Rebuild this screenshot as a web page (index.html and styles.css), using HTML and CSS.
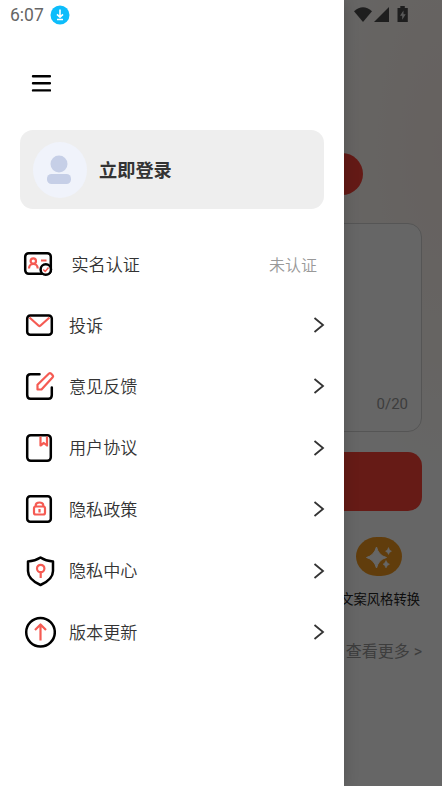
FILE: index.html
```html
<!DOCTYPE html>
<html lang="zh-CN">
<head>
<meta charset="utf-8">
<title>菜单</title>
<link rel="stylesheet" href="styles.css">
</head>
<body>
<main class="page">
  <div class="system-icons">
    <svg width="55" height="18" viewBox="0 0 55 18" fill="#4d4d4d">
      <path d="M0 5.2Q9 -2.7 18 5.2L9 16Z"/>
      <path d="M35 1V16H20Z"/>
      <path d="M43.500 2h2.8V0h4.500v2h3v14H43.500Z"/>
      <path d="M49.500 4.5l-3.500 5.300h2.200v4l3.500-5.500h-2.200Z" fill="#ddd"/>
    </svg>
  </div>
  <div class="pill"></div>
  <section class="editor"><span>0/20</span></section>
  <div class="action"></div>
  <section class="tool">
    <svg width="46" height="40" viewBox="0 0 46 40">
      <rect width="46" height="39" rx="21" ry="19.5" fill="#f39a20"/>
      <path d="M20.500 10Q22.500 18.500 30.500 20.500Q22.500 22.500 20.500 31Q18 22.500 10.500 20.500Q18 18.500 20.500 10Z" fill="#fff" stroke="#fff" stroke-linejoin="round"/>
      <path d="M32.500 10.500Q33 13.500 35.500 14.200Q33 15 32.500 17.500Q31.800 15 29.500 14.200Q31.800 13.500 32.500 10.500ZM30 23.500Q31 26.500 33.500 27.200Q31 28 30 31Q29 28 27 27.200Q29 26.500 30 23.500Z" fill="#fff" stroke="#fff" stroke-width=".5"/>
    </svg>
    <span>文案风格转换</span>
  </section>
  <div class="more">查看更多 &gt;</div>
</main>
<div class="scrim"></div>
<aside class="drawer">
  <header class="status">
    <span>6:07</span>
    <svg width="20" height="20" viewBox="0 0 20 20"><circle cx="10" cy="10" r="9.500" fill="#0dbdfb"/><path d="M10 4.500V12M7 9.300L10 12.200L13 9.300M7 14.500H13" fill="none" stroke="#fff" stroke-width="1.600"/></svg>
  </header>
  <svg class="burger" width="20" height="18" viewBox="0 0 20 18"><path d="M2 2.200H19M2 9.300H19M2 16.400H19" stroke="#000" stroke-width="2.400" stroke-linecap="round"/></svg>
  <section class="login">
    <svg width="54" height="56" viewBox="0 0 54 56"><ellipse cx="27" cy="28" rx="27" ry="28" fill="#f0f3fb"/><circle cx="26" cy="22" r="8.500" fill="#c6cfe7"/><rect x="14" y="32" width="24" height="10" rx="4.500" fill="#c6cfe7"/></svg>
    <span>立即登录</span>
  </section>
  <nav class="menu">
    <div class="row verify">
      <svg class="icon" width="34" height="34" viewBox="0 0 34 34"><rect x="3.200" y="6.200" width="25.600" height="20.600" rx="3.500" class="ink"/><circle cx="11.300" cy="14" r="2.700" class="red"/><path d="M7 21.500C7.200 15.500 15.500 15.500 15.700 21.500M19 13.500H24.500" class="red"/><circle cx="23.800" cy="22.500" r="5.200" class="ink" fill="#fff"/><path d="M21.200 22.500L23.200 24.500L26.500 20.500" class="red thin"/></svg>
      <span class="label">实名认证</span><span class="state">未认证</span>
    </div>
    <div class="row">
      <svg class="icon" width="34" height="34" viewBox="0 0 34 34"><rect x="5.200" y="7.500" width="24.600" height="19.300" rx="3" class="ink"/><path d="M7.500 9.500L16.700 17.700Q17.500 18.300 18.300 17.700L27.500 9.500" class="red"/></svg>
      <span class="label">投诉</span><svg class="chevron" width="12" height="18" viewBox="0 0 12 18"><path d="M1.500 2L10 9L1.500 16"/></svg>
    </div>
    <div class="row">
      <svg class="icon" width="34" height="34" viewBox="0 0 34 34"><path d="M17.500 5.200H8.500Q5.200 5.200 5.200 8.500V26Q5.200 29.800 8.500 29.800H26.500Q29.800 29.800 29.800 26V18.500" class="ink"/><path d="M15.500 20.500V15.800L27 4.500Q28 3.700 29 4.600L30.800 6.500Q31.500 7.300 30.700 8.200L19.500 20.500Z" class="red"/></svg>
      <span class="label">意见反馈</span><svg class="chevron" width="12" height="18" viewBox="0 0 12 18"><path d="M1.500 2L10 9L1.500 16"/></svg>
    </div>
    <div class="row">
      <svg class="icon" width="34" height="34" viewBox="0 0 34 34"><rect x="5.200" y="4.200" width="23.600" height="25.600" rx="3.500" class="ink"/><path d="M18.500 5.500V14.500L21.800 12L25 14.500V5.500" class="red"/></svg>
      <span class="label">用户协议</span><svg class="chevron" width="12" height="18" viewBox="0 0 12 18"><path d="M1.500 2L10 9L1.500 16"/></svg>
    </div>
    <div class="row">
      <svg class="icon" width="34" height="34" viewBox="0 0 34 34"><rect x="5.200" y="4.200" width="23.600" height="25.600" rx="3" class="ink"/><rect x="12" y="14.500" width="11" height="8" rx="1.800" class="red"/><path d="M13.700 14.500V13.500C13.700 9.500 21.300 9.500 21.300 13.500V14.500M17.500 17V20.500" class="red"/></svg>
      <span class="label">隐私政策</span><svg class="chevron" width="12" height="18" viewBox="0 0 12 18"><path d="M1.500 2L10 9L1.500 16"/></svg>
    </div>
    <div class="row">
      <svg class="icon" width="34" height="34" viewBox="0 0 34 34"><path d="M18.500 3.500Q24 7 31 7.500V17Q31 25.500 18.500 31Q6 25.500 6 17V7.500Q13 7 18.500 3.500Z" class="ink"/><circle cx="18.700" cy="14.500" r="3.700" class="red"/><path d="M18.700 18.500V24" class="red"/></svg>
      <span class="label">隐私中心</span><svg class="chevron" width="12" height="18" viewBox="0 0 12 18"><path d="M1.500 2L10 9L1.500 16"/></svg>
    </div>
    <div class="row">
      <svg class="icon" width="34" height="34" viewBox="0 0 34 34"><circle cx="18.500" cy="17.300" r="14.300" class="ink"/><path d="M18.500 25.500V10M13 15L18.500 9.500L24 15" class="red"/></svg>
      <span class="label">版本更新</span><svg class="chevron" width="12" height="18" viewBox="0 0 12 18"><path d="M1.500 2L10 9L1.500 16"/></svg>
    </div>
  </nav>
</aside>
</body>
</html>
```
FILE: styles.css
```css
* { box-sizing: border-box; }
body {
  margin: 0;
  width: 442px;
  height: 786px;
  position: relative;
  overflow: hidden;
  background: #fff;
  font-family: Roboto, "Noto Sans CJK SC", sans-serif;
  color: #333;
}
svg { display: block; flex-shrink: 0; }

.page {
  height: 786px;
  padding: 6px 20px 0;
  display: flex;
  flex-direction: column;
  align-items: flex-end;
  background: radial-gradient(ellipse 130px 330px at 100% 150px, #fff3ef, #fffaf5 60%, #fff);
}
.system-icons { height: 147px; padding-right: 13px; }
.pill { width: 160px; height: 42px; margin-right: 59px; border-radius: 21px; background: #fa4137; }
.editor {
  width: 402px;
  height: 209px;
  margin-top: 28px;
  padding: 170px 13px 0;
  border: 1px solid #d4d4d4;
  border-radius: 14px;
  background: #fff;
  text-align: right;
  font-size: 15px;
  line-height: 20px;
  color: #999;
}
.action { width: 402px; height: 59px; margin-top: 20px; border-radius: 14px; background: #ff4538; }
.tool {
  margin-top: 26px;
  display: flex;
  flex-direction: column;
  align-items: center;
  font-size: 13.300px;
  line-height: 20px;
  color: #222;
  margin-right: 2px;
}
.tool svg { margin: 0 2px 13px 0; }
.more { margin-top: 32px; font-size: 16px; line-height: 20px; color: #999; }

.scrim { position: absolute; inset: 0; background: rgba(0, 0, 0, 0.6); }

.drawer {
  position: absolute;
  inset: 0 auto 0 0;
  width: 344px;
  padding: 0 20px;
  background: #fff;
  box-shadow: 0 0 14px rgba(0, 0, 0, 0.2);
}
.status {
  height: 30px;
  margin-left: -10px;
  display: flex;
  align-items: center;
  gap: 6px;
  font-size: 17.500px;
  color: #666;
}
.burger { margin: 44px 0 0 11px; }
.login {
  height: 79px;
  margin-top: 38px;
  padding-left: 13px;
  display: flex;
  align-items: center;
  gap: 12px;
  border-radius: 13px;
  background: #eee;
  font-size: 18.200px;
  font-weight: 700;
}
.login span { padding-bottom: 2px; }
.menu { padding-top: 24px; }
.row {
  height: 61.400px;
  display: flex;
  align-items: center;
  padding-left: 2px;
  font-size: 17.100px;
  font-weight: 350;
}
.label { flex: 1; margin-left: 13px; padding-bottom: 2px; }
.verify .label { margin-left: 15.500px; padding-bottom: 0; }
.state { font-size: 16px; color: #999; margin-right: 7px; }
.chevron { margin-right: -1px; }
.chevron path { fill: none; stroke: #333; stroke-width: 1.800; }
.ink { stroke: #000; stroke-width: 2.500; stroke-linejoin: round; stroke-linecap: round; }
.ink:not([fill]) { fill: none; }
.red { fill: none; stroke: #f55b53; stroke-width: 2.200; stroke-linejoin: round; }
.thin { stroke-width: 1.500; }
```
